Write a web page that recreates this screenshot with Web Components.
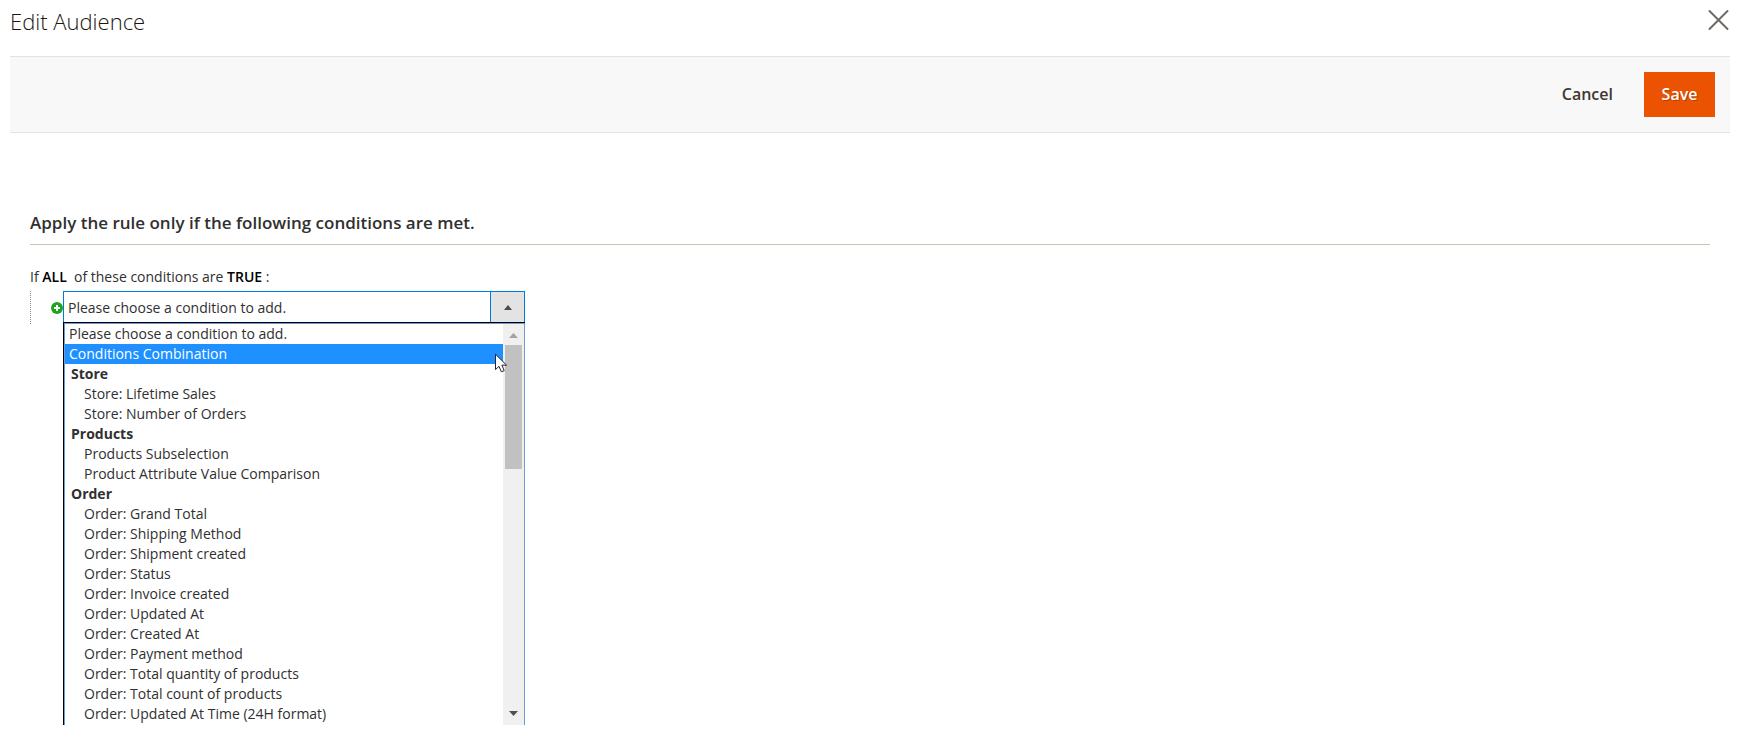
<!DOCTYPE html>
<html lang="en">
<head>
<meta charset="utf-8">
<title>Edit Audience</title>
<style>
  body { margin: 0; min-height: 100vh; background: #fff; color: #303030; font: 14px/20px "Open Sans", "Noto Sans", sans-serif; }
</style>
</head>
<body>
<audience-modal heading="Edit Audience">
  <action-bar slot="actions"></action-bar>
  <rule-fieldset legend="Apply the rule only if the following conditions are met.">
    <rule-conditions></rule-conditions>
  </rule-fieldset>
</audience-modal>

<script>
class BaseElement extends HTMLElement {
  connectedCallback() {
    if (this.shadowRoot) return;
    this.attachShadow({ mode: 'open' }).innerHTML = this.render();
  }
}

customElements.define('audience-modal', class extends BaseElement {
  render() {
    return `
      <style>
        :host { display: block; padding: 0 11px 0 10px; }
        header { display: flex; justify-content: space-between; height: 56px; }
        h1 { margin: 7px 0 0; font-size: 22px; line-height: 28px; font-weight: 300; color: #1c1612; }
        button { margin: 8px 0 0; padding: 0; width: 24px; height: 24px; border: 0; background: none; cursor: pointer; }
        svg { display: block; }
      </style>
      <header>
        <h1>${this.getAttribute('heading')}</h1>
        <button type="button" aria-label="Close">
          <svg width="24" height="24" viewBox="0 0 24 24"><path d="M3.500 3L21.500 21M21.500 3L3.500 21" stroke="#736963" stroke-width="2" stroke-linecap="round"/></svg>
        </button>
      </header>
      <slot name="actions"></slot>
      <slot></slot>`;
  }
});

customElements.define('action-bar', class extends BaseElement {
  render() {
    return `
      <style>
        :host { display: flex; justify-content: flex-end; align-items: center; padding: 15px; background: #f8f8f8; border-top: 1px solid #e3e3e3; border-bottom: 1px solid #e3e3e3; }
        button { height: 45px; padding: 0 18px; border: 0; background: none; color: #41362f; font: 600 16px/21px "Open Sans", "Noto Sans", sans-serif; cursor: pointer; }
        .save { width: 71px; padding: 0; margin-left: 13px; background: #eb5202; color: #fff; text-shadow: 1px 1px 0 rgba(0,0,0,.25); }
      </style>
      <button type="button">Cancel</button>
      <button type="button" class="save">Save</button>`;
  }
});

customElements.define('rule-fieldset', class extends BaseElement {
  render() {
    return `
      <style>
        :host { display: block; padding: 74px 20px 0; }
        h2 { margin: 0 0 22px; padding: 4px 0 9px; border-bottom: 1px solid #cac3b4; font-size: 17px; line-height: 24px; font-weight: 600; }
      </style>
      <section><h2>${this.getAttribute('legend')}</h2><slot></slot></section>`;
  }
});

customElements.define('rule-conditions', class extends BaseElement {
  render() {
    return `
      <style>
        :host { display: block; }
        p { margin: 0 0 4px; white-space: pre; }
        a { color: #000; font-weight: 600; text-decoration: none; }
        .children { display: flex; align-items: center; height: 33px; padding-left: 20px; border-left: 1px dotted #888; }
        .add { flex: none; width: 12px; height: 12px; padding: 0; border: 0; background: none; cursor: pointer; }
        svg { display: block; }
      </style>
      <p>If <a href="#all">ALL</a>  of these conditions are <a href="#true">TRUE</a> :</p>
      <div class="children">
        <button class="add" type="button" aria-label="Add condition">
          <svg width="12" height="12" viewBox="0 0 12 12"><circle cx="6" cy="6" r="6" fill="#1ea51e"/><path d="M6 3v6M3 6h6" stroke="#fff" stroke-width="2"/></svg>
        </button>
        <condition-picker></condition-picker>
      </div>`;
  }
});

const PROMPT = 'Please choose a condition to add.';
const GROUPS = [
  ['Store', ['Store: Lifetime Sales', 'Store: Number of Orders']],
  ['Products', ['Products Subselection', 'Product Attribute Value Comparison']],
  ['Order', ['Order: Grand Total', 'Order: Shipping Method', 'Order: Shipment created', 'Order: Status',
    'Order: Invoice created', 'Order: Updated At', 'Order: Created At', 'Order: Payment method',
    'Order: Total quantity of products', 'Order: Total count of products', 'Order: Updated At Time (24H format)']]
];

customElements.define('condition-picker', class extends BaseElement {
  render() {
    const groups = GROUPS.map(([name, items]) =>
      `<li class="group" role="presentation">${name}</li>` +
      items.map(i => `<li class="child" role="option">${i}</li>`).join('')).join('');
    return `
      <style>
        :host { display: block; position: relative; align-self: stretch; width: 462px; max-width: 100%; }
        select { appearance: none; box-sizing: border-box; display: block; width: 100%; height: 32px; margin: 0; padding: 2px 38px 0 4px;
          border: 1px solid #007bdb; border-radius: 0; outline: 0; color: #303030; font: inherit;
          background: linear-gradient(#007bdb, #007bdb) right 33px top 0 / 1px 100% no-repeat, linear-gradient(#e3e3e3, #e3e3e3) right / 33px 100% no-repeat, #fff; }
        .arrow { position: absolute; right: 13px; top: 14px; pointer-events: none; }
        .menu { position: absolute; left: 0; right: 0; top: 31px; display: flex; border-top: 1px solid #000; border-left: 1px solid #000; background: #fff; }
        .inner { flex: 1; display: flex; border: 1px solid #6f9ad9; border-bottom: 0; }
        ul { flex: 1; list-style: none; margin: 0; padding: 0 0 1px; }
        li { padding-left: 4px; white-space: nowrap; cursor: default; }
        .active { background: #1e90ff; color: #fff; }
        .group { padding-left: 6px; font-weight: 700; }
        .child { padding-left: 19px; }
        .scroll { box-sizing: border-box; width: 21px; padding: 9px 2px; display: flex; flex-direction: column; align-items: center; justify-content: space-between; background: #f0f0f0; }
        .top { display: flex; flex-direction: column; align-items: center; gap: 7px; width: 100%; }
        .thumb { width: 17px; height: 124px; background: #c1c1c1; }
        svg { display: block; }
        .pointer { position: absolute; left: 432px; top: 62px; pointer-events: none; }
      </style>
      <select aria-label="Condition">
        <option>${PROMPT}</option><option>Conditions Combination</option>
        ${GROUPS.map(([n, o]) => `<optgroup label="${n}">${o.map(i => `<option>${i}</option>`).join('')}</optgroup>`).join('')}
      </select>
      <svg class="arrow" width="8" height="5" viewBox="0 0 8 5"><path d="M4 0L8 5H0z" fill="#514943"/></svg>
      <div class="menu"><div class="inner">
        <ul role="listbox" aria-label="Conditions">
          <li role="option">${PROMPT}</li>
          <li role="option" class="active" aria-selected="true">Conditions Combination</li>
          ${groups}
        </ul>
        <div class="scroll" aria-hidden="true">
          <div class="top">
            <svg width="9" height="5" viewBox="0 0 9 5"><path d="M4.500 0L9 5H0z" fill="#a3a3a3"/></svg>
            <div class="thumb"></div>
          </div>
          <svg width="9" height="5" viewBox="0 0 9 5"><path d="M0 0H9L4.500 5z" fill="#505050"/></svg>
        </div>
      </div></div>
      <svg class="pointer" width="13" height="21" viewBox="0 0 13 21"><path d="M.500 1.200V16.500L4 13.300L6.300 18.800L9.200 17.600L6.900 12.200H11.600z" fill="#fff" stroke="#223" stroke-width="1"/></svg>`;
  }
});
</script>
</body>
</html>
